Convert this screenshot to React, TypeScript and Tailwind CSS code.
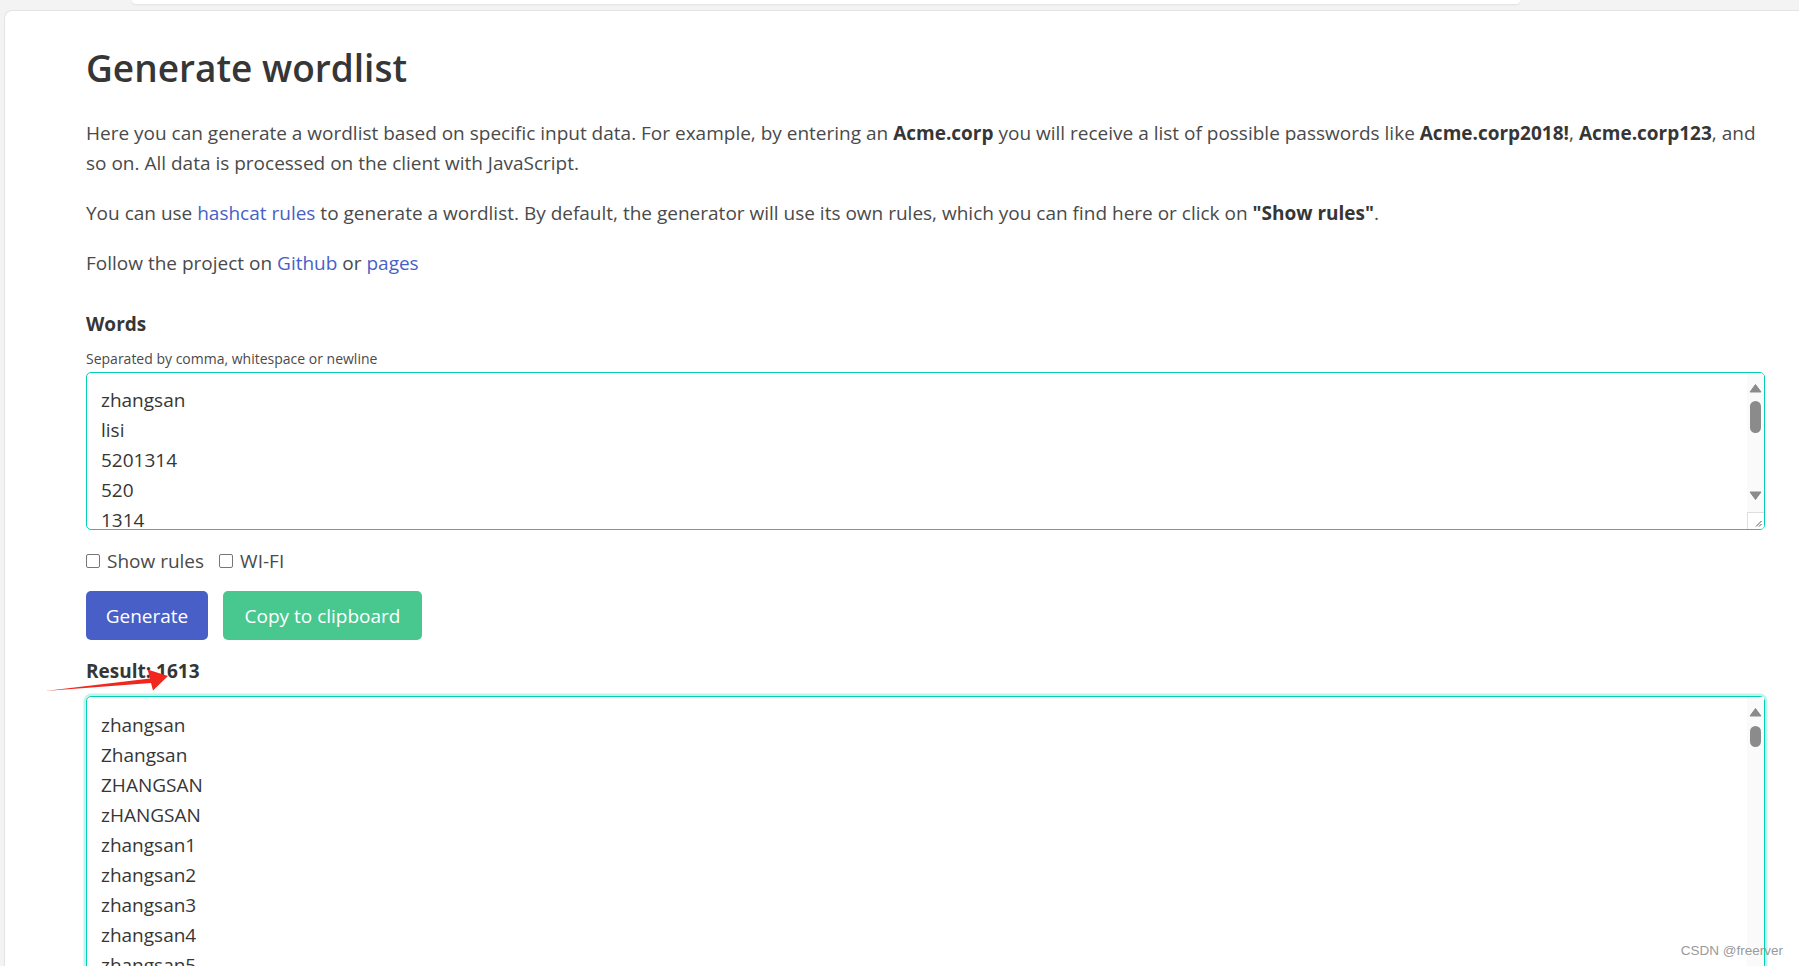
import React from 'react';

const inputWords = ['zhangsan', 'lisi', '5201314', '520', '1314'];
const resultWords = [
  'zhangsan',
  'Zhangsan',
  'ZHANGSAN',
  'zHANGSAN',
  'zhangsan1',
  'zhangsan2',
  'zhangsan3',
  'zhangsan4',
  'zhangsan5',
  'zhangsan6',
  'zhangsan7',
];

// classic scrollbar with arrows, drawn to look like the Windows one
const ScrollTrack: React.FC<{ height: number; thumbTop: number; thumbHeight: number; down?: boolean }> = ({
  height,
  thumbTop,
  thumbHeight,
  down,
}) => (
  <svg width="17" height={height} className="block">
    <rect x="0" y="0" width="17" height={height} fill="#fafafa" />
    <path d="M3 19 L8.5 11.5 L14 19 Z" fill="#8b8b8b" stroke="#8b8b8b" strokeWidth="1" strokeLinejoin="round" />
    <rect x="3" y={thumbTop} width="11" height={thumbHeight} rx="5.5" fill="#8b8b8b" />
    {down && (
      <path
        d={`M3 ${height - 20} L14 ${height - 20} L8.5 ${height - 12.5} Z`}
        fill="#8b8b8b"
        stroke="#8b8b8b"
        strokeWidth="1"
        strokeLinejoin="round"
      />
    )}
  </svg>
);

const Checkbox: React.FC<{ label: string }> = ({ label }) => (
  <label className="flex items-center gap-[7px]">
    <span className="w-[14px] h-[14px] rounded-[2px] border border-[#767676] bg-white" />
    <span>{label}</span>
  </label>
);

const App: React.FC = () => {
  return (
    <div className="relative h-[966px] overflow-hidden bg-[#f3f3f3] font-['Open_Sans',sans-serif] text-[19px] leading-[30px] text-[#4a4a4a]">
      {/* strip of the header above */}
      <div className="h-[10px] pl-[132px]">
        <div className="w-[1388px] h-[4px] bg-white rounded-b-[10px] shadow-[0_1px_2px_rgba(0,0,0,0.08)]" />
      </div>

      <div className="ml-[4px] h-[956px] bg-white border-l border-t border-[#e4e4e4] rounded-tl-[8px] pt-[35px] pl-[81px] pr-[34px]">
        <h1 className="text-[37px] leading-[44px] font-semibold text-[#363636]">Generate wordlist</h1>

        <p className="mt-[28px]">
          Here you can generate a wordlist based on specific input data. For example, by entering an{' '}
          <strong className="font-bold text-[#363636]">Acme.corp</strong> you will receive a list of possible passwords
          like <strong className="font-bold text-[#363636]">Acme.corp2018!</strong>,{' '}
          <strong className="font-bold text-[#363636]">Acme.corp123</strong>, and
          <br />
          so on. All data is processed on the client with JavaScript.
        </p>

        <p className="mt-[20px]">
          You can use <a className="text-[#485fc7]">hashcat rules</a> to generate a wordlist. By default, the generator
          will use its own rules, which you can find here or click on{' '}
          <strong className="font-bold text-[#363636]">"Show rules"</strong>.
        </p>

        <p className="mt-[20px]">
          Follow the project on <a className="text-[#485fc7]">Github</a> or <a className="text-[#485fc7]">pages</a>
        </p>

        <div className="mt-[31px] font-bold text-[#363636]">Words</div>
        <div className="mt-[9px] text-[14px] leading-[22px]">Separated by comma, whitespace or newline</div>

        <div className="mt-[2px] h-[158px] flex border border-[#00d1b2] rounded-[5px] overflow-hidden text-[#363636]">
          <div className="flex-1 pl-[14px] pt-[12px]">
            {inputWords.map((w) => (
              <div key={w}>{w}</div>
            ))}
          </div>
          <div className="flex flex-col">
            <ScrollTrack height={139} thumbTop={28} thumbHeight={32} down />
            <div className="relative w-[17px] h-[17px] bg-white border-l border-t border-[#dedede]">
              <svg width="16" height="16" className="absolute left-0 top-0">
                <path d="M13.5 8 L8 13.5 M13.5 11 L11 13.5" stroke="#555" strokeWidth="1" />
              </svg>
            </div>
          </div>
        </div>

        <div className="mt-[16px] flex items-center gap-[15px] text-[#4a4a4a]">
          <Checkbox label="Show rules" />
          <Checkbox label="WI-FI" />
        </div>

        <div className="mt-[15px] flex gap-[15px]">
          <button className="w-[122px] h-[49px] rounded-[5px] bg-[#485fc7] text-white">Generate</button>
          <button className="w-[199px] h-[49px] rounded-[5px] bg-[#48c78e] text-white">Copy to clipboard</button>
        </div>

        <div className="mt-[16px] font-bold text-[#363636]">Result: 1613</div>

        <div className="mt-[10px] h-[400px] flex border border-[#00d1b2] rounded-[5px] shadow-[0_0_0_2.5px_rgba(0,209,178,0.25)] text-[#363636]">
          <div className="flex-1 pl-[14px] pt-[13px] overflow-hidden">
            {resultWords.map((w) => (
              <div key={w}>{w}</div>
            ))}
          </div>
          <ScrollTrack height={398} thumbTop={29} thumbHeight={21} />
        </div>
      </div>

      {/* red annotation arrow */}
      <svg width="200" height="720" className="absolute left-0 top-0 pointer-events-none">
        <path d="M45 691 L150 678.5 L147.5 669.5 L168 676 L153 690.5 L151 683 Z" fill="#f0261f" />
      </svg>

      <div className="absolute right-[16px] bottom-[6px] font-['Liberation_Sans',sans-serif] text-[13.5px] leading-[18px] text-[#9a9a9a]">
        CSDN @freerver
      </div>
    </div>
  );
};

export default App;
